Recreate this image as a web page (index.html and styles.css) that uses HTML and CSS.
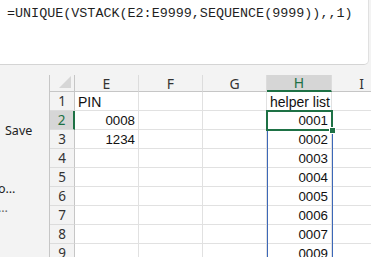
FILE: index.html
```html
<!DOCTYPE html>
<html>
<head>
<meta charset="utf-8">
<link rel="stylesheet" href="styles.css">
</head>
<body>
<div class="formula">=UNIQUE(VSTACK(E2:E9999,SEQUENCE(9999)),,1)</div>
<div class="main">
  <div class="side">
    <div class="side-save">Save</div>
    <div class="side-item">o…</div>
    <div class="side-item dots">…</div>
  </div>
  <div class="sheet">
    <div class="grid">
      <div class="corner"><span class="tri"></span></div>
      <div class="ch">E</div>
      <div class="ch">F</div>
      <div class="ch">G</div>
      <div class="ch sel">H</div>
      <div class="ch">I</div>

      <div class="rh">1</div>
      <div class="c">PIN</div><div class="c"></div><div class="c"></div><div class="c">helper list</div><div class="c"></div>

      <div class="rh sel">2</div>
      <div class="c r">0008</div><div class="c"></div><div class="c"></div><div class="c r">0001</div><div class="c"></div>

      <div class="rh">3</div>
      <div class="c r">1234</div><div class="c"></div><div class="c"></div><div class="c r">0002</div><div class="c"></div>

      <div class="rh">4</div>
      <div class="c"></div><div class="c"></div><div class="c"></div><div class="c r">0003</div><div class="c"></div>

      <div class="rh">5</div>
      <div class="c"></div><div class="c"></div><div class="c"></div><div class="c r">0004</div><div class="c"></div>

      <div class="rh">6</div>
      <div class="c"></div><div class="c"></div><div class="c"></div><div class="c r">0005</div><div class="c"></div>

      <div class="rh">7</div>
      <div class="c"></div><div class="c"></div><div class="c"></div><div class="c r">0006</div><div class="c"></div>

      <div class="rh">8</div>
      <div class="c"></div><div class="c"></div><div class="c"></div><div class="c r">0007</div><div class="c"></div>

      <div class="rh">9</div>
      <div class="c"></div><div class="c"></div><div class="c"></div><div class="c r">0009</div><div class="c"></div>
    </div>
    <div class="spill"></div>
    <div class="active"><span class="handle"></span></div>
  </div>
</div>
</body>
</html>
```
FILE: styles.css
```css
html, body {
  margin: 0;
  padding: 0;
}
body {
  width: 371px;
  height: 257px;
  overflow: hidden;
  background: #f3f3f3;
  font-family: "Liberation Sans", Arial, sans-serif;
}
.formula {
  box-sizing: border-box;
  width: 369px;
  height: 65px;
  background: #ffffff;
  border-bottom: 1px solid #d4d4d4;
  border-right: 1px solid #e0e0e0;
  border-bottom-right-radius: 5px;
  font-family: "Liberation Mono", monospace;
  font-size: 13.4px;
  line-height: 17px;
  padding: 5px 0 0 7px;
  color: #1f1f1f;
  white-space: nowrap;
}
.main {
  display: flex;
  height: 192px;
}
.side {
  width: 49px;
  flex: none;
  font-family: "Noto Sans", sans-serif;
  font-size: 12.5px;
  color: #222;
  overflow: hidden;
  white-space: nowrap;
}
.side-save {
  margin-top: 57px;
  padding-left: 5px;
  line-height: 17px;
}
.side-item {
  margin-top: 41px;
  line-height: 17px;
  margin-left: -2px;
}
.side-item.dots {
  margin-top: 2px;
  color: #666;
}
.sheet {
  position: relative;
  flex: 1;
  margin-top: 10px;
  overflow: hidden;
  border-left: 1px solid #c6c6c6;
}
.grid {
  display: grid;
  grid-template-columns: 25px 64px 64px 64px 65px 60px;
  grid-template-rows: 17px repeat(9, 19px);
  font-size: 14px;
}
.corner {
  position: relative;
  border-right: 1px solid #c6c6c6;
  border-bottom: 1px solid #c6c6c6;
  box-sizing: border-box;
}
.tri {
  position: absolute;
  right: 3px;
  bottom: 3px;
  width: 0;
  height: 0;
  border-left: 12px solid transparent;
  border-bottom: 12px solid #d6d6d6;
}
.ch {
  box-sizing: border-box;
  border-right: 1px solid #dcdcdc;
  border-bottom: 1px solid #c6c6c6;
  text-align: center;
  font-family: "Noto Sans", sans-serif;
  font-size: 14px;
  line-height: 17px;
  color: #333;
}
.ch.sel {
  background: #d6d6d6;
  color: #1e7145;
  border-bottom: 2px solid #1e7145;
  line-height: 16px;
}
.rh {
  box-sizing: border-box;
  border-right: 1px solid #c6c6c6;
  border-bottom: 1px solid #dcdcdc;
  text-align: center;
  font-family: "Noto Sans", sans-serif;
  font-size: 13.5px;
  line-height: 19px;
  color: #333;
}
.rh.sel {
  background: #d6d6d6;
  color: #1e7145;
  border-right: 2px solid #1e7145;
}
.c {
  box-sizing: border-box;
  background: #ffffff;
  border-right: 1px solid #e1e1e1;
  border-bottom: 1px solid #e1e1e1;
  line-height: 20px;
  padding: 0 3px;
  color: #111;
  white-space: nowrap;
  overflow: hidden;
}
.c.r {
  text-align: right;
  font-size: 13.3px;
}
.spill {
  position: absolute;
  left: 217px;
  top: 36px;
  width: 64px;
  height: 200px;
  border-left: 1px solid #3c68b8;
  border-right: 1px solid #3c68b8;
}
.active {
  position: absolute;
  left: 216px;
  top: 35px;
  width: 63px;
  height: 17px;
  border: 2px solid #1e7145;
}
.handle {
  position: absolute;
  right: -5px;
  bottom: -5px;
  width: 5px;
  height: 5px;
  background: #1e7145;
  border: 1px solid #ffffff;
}
```
